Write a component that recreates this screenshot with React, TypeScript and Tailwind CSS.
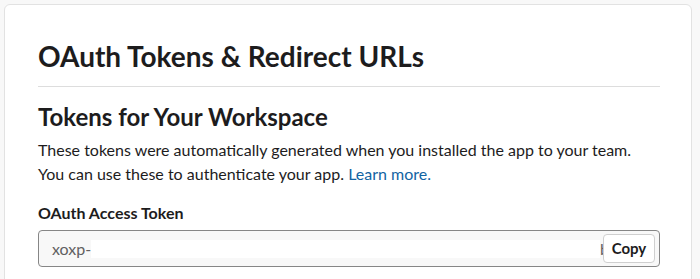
import React from "react";

export default function App() {
  return (
    <div className="h-[279px] w-[700px] bg-[#f8f8f8] pl-[4px] pt-[4px] pr-[8px] overflow-hidden" style={{ fontFamily: "Lato, 'Noto Sans', sans-serif" }}>
      <div className="h-[290px] rounded-[6px] border border-[#e2e2e2] bg-white pl-[33px] pr-[31px] pt-[31px]">
        <h1 className="text-[28px] font-bold leading-[40px] text-[#1d1c1d]">OAuth Tokens &amp; Redirect URLs</h1>
        <div className="mt-[10px] border-t border-[#dddddd]" />
        <h2 className="mt-[15px] text-[24px] font-bold leading-[30px] text-[#1d1c1d]">Tokens for Your Workspace</h2>
        <p className="mt-[6px] text-[16px] leading-[24px] text-[#1d1c1d]">
          These tokens were automatically generated when you installed the app to your team.
          <br />
          You can use these to authenticate your app. <span className="text-[#1264a3]">Learn more.</span>
        </p>
        <div className="mt-[17px] text-[16px] font-bold leading-[20px] text-[#1d1c1d]">OAuth Access Token</div>
        <div className="relative mt-[7px] flex h-[37px] items-center rounded-[4px] border border-[#868686] bg-[#f8f8f8] pl-[13px] pr-[4px]">
          <span className="text-[16px] text-[#616061]">xoxp-</span>
          <div className="h-[18px] flex-1 bg-white" />
          <span className="w-[3px] overflow-hidden text-[16px] leading-[18px] text-[#616061]">b</span>
          <button className="h-[29px] w-[52px] rounded-[4px] border border-[#cfcfcf] bg-white text-[15px] font-bold leading-none text-[#1d1c1d]">Copy</button>
        </div>
      </div>
    </div>
  );
}
